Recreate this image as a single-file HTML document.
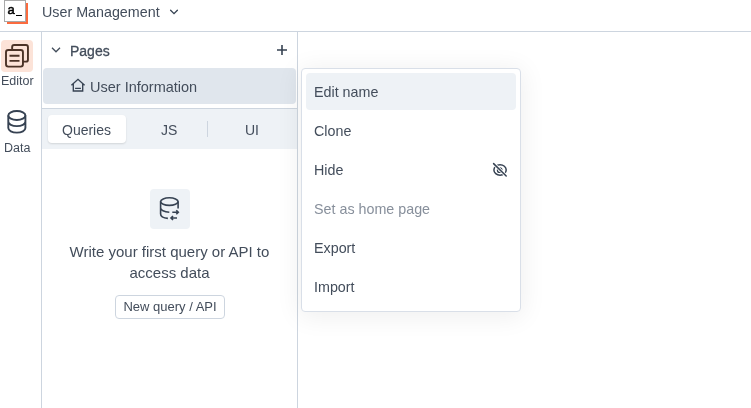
<!DOCTYPE html>
<html><head><meta charset="utf-8">
<style>
*{box-sizing:border-box;margin:0;padding:0}
html,body{width:751px;height:408px;overflow:hidden;background:#fff;font-family:"Liberation Sans",sans-serif;color:#434d5b}
.abs{position:absolute}
#header{left:0;top:0;width:751px;height:32px;border-bottom:1px solid #cdd5df;background:#fff}
#logoshadow{left:7px;top:3px;width:21px;height:21px;background:#fb6b3f}
#logo{left:4px;top:0;width:22px;height:22px;background:#fff;border:1px solid #a9a9a9}
#logo span{position:absolute;left:2.5px;top:1.7px;font-size:13px;color:#000;line-height:14px;-webkit-text-stroke:0.5px #000}
#logo i{position:absolute;left:10.8px;top:14.2px;width:6.6px;height:1.3px;background:#000}
#title{left:42px;top:4px;font-size:14.3px;line-height:17px;color:#434d5b}
#sidebar{left:0;top:32px;width:42px;height:376px;border-right:1px solid #cdd5df}
#edhl{left:1px;top:40px;width:32px;height:32px;border-radius:4px;background:#fce3d8}
.slabel{font-size:12.5px;color:#434d5b;line-height:14px}
#panel{left:42px;top:32px;width:256px;height:376px;border-right:1px solid #cdd5df}
#selpage{left:43px;top:68px;width:253px;height:36px;background:#e0e6ed;border-radius:4px}
#tabsbg{left:42px;top:108px;width:255px;height:41px;background:#eef2f6;border-top:1px solid #cdd5df}
#qbtn{left:48px;top:115px;width:78px;height:28px;background:#fff;border-radius:4px;box-shadow:0 1px 2px rgba(0,0,0,0.12)}
#menu{left:301px;top:68px;width:220px;height:244px;background:#fff;border:1px solid #d9dfe8;border-radius:4px;box-shadow:0 3px 26px 2px rgba(0,0,0,0.065);padding:4px}
.mi{position:relative;height:37px;margin-bottom:2px;border-radius:4px;font-size:14.3px;line-height:39px;padding-left:8px;color:#434d5b}
.mi.hl{background:#eef2f6}
.mi.dis{color:#878f9b}
#wrap{position:absolute;left:0;top:0;width:751px;height:408px;will-change:transform}
</style></head><body><div id="wrap">
<div id="header" class="abs">
  <div id="logoshadow" class="abs"></div><div id="logo" class="abs"><span>a</span><i></i></div>
  <div id="title" class="abs">User Management</div>
  <svg class="abs" style="left:168px;top:5px" width="12" height="12" viewBox="0 0 12 12"><path d="M2.6 5.2 L6 8.6 L9.4 5.2" fill="none" stroke="#364252" stroke-width="1.3" stroke-linecap="round"/></svg>
</div>
<div id="sidebar" class="abs"></div>
<div id="edhl" class="abs"></div>
<svg class="abs" style="left:0;top:38px" width="34" height="34" viewBox="0 0 34 34">
  <path d="M12.15 12.05 V9.05 a2 2 0 0 1 2-2 H25.95 a2 2 0 0 1 2 2 V21.65 a2 2 0 0 1 -2 2 H22.95" fill="none" stroke="#4b3327" stroke-width="1.9"/>
  <rect x="6" y="12.05" width="16.95" height="16.6" rx="2.3" fill="none" stroke="#4b3327" stroke-width="1.9"/>
  <path d="M9.5 17.75 H19.5 M9.5 22.9 H19.5" stroke="#4b3327" stroke-width="1.9"/>
</svg>
<div class="abs slabel" style="left:1px;top:74px">Editor</div>
<svg class="abs" style="left:4px;top:106px" width="26" height="30" viewBox="0 0 26 30">
  <ellipse cx="12.85" cy="9.5" rx="8.55" ry="4.5" fill="none" stroke="#364252" stroke-width="1.9"/>
  <path d="M4.3 9.5 V22.1 c0 2.5 3.8 4.5 8.55 4.5 s8.55-2 8.55-4.5 V9.5 M4.3 15.6 c0 2.5 3.8 4.5 8.55 4.5 s8.55-2 8.55-4.5" fill="none" stroke="#364252" stroke-width="1.9"/>
</svg>
<div class="abs slabel" style="left:4px;top:141px">Data</div>

<div id="panel" class="abs"></div>
<svg class="abs" style="left:50px;top:45px" width="12" height="10" viewBox="0 0 12 10"><path d="M2 2.8 L6 6.8 L10 2.8" fill="none" stroke="#434d5b" stroke-width="1.3"/></svg>
<div class="abs" style="left:70px;top:43px;font-size:14px;line-height:17px;color:#434d5b;-webkit-text-stroke:0.3px #434d5b">Pages</div>
<svg class="abs" style="left:276px;top:44px" width="12" height="12" viewBox="0 0 12 12"><path d="M6 1 V11 M1 6 H11" stroke="#364252" stroke-width="1.6"/></svg>
<div id="selpage" class="abs"></div>
<svg class="abs" style="left:70px;top:78px" width="16" height="15" viewBox="0 0 16 15"><path d="M1.4 7.2 L8 1.3 L14.6 7.2 M3.3 5.7 V13 H12.7 V5.7 M5.1 10.4 H10.9" fill="none" stroke="#364252" stroke-width="1.35"/></svg>
<div class="abs" style="left:90px;top:79px;font-size:14.5px;line-height:17px;color:#434d5b">User Information</div>
<div id="tabsbg" class="abs"></div>
<div id="qbtn" class="abs"></div>
<div class="abs" style="left:62px;top:122px;font-size:14px;line-height:17px;color:#434d5b">Queries</div>
<div class="abs" style="left:161px;top:122px;font-size:14px;line-height:17px;color:#434d5b">JS</div>
<div class="abs" style="left:207px;top:121px;width:1px;height:16px;background:#cdd5df"></div>
<div class="abs" style="left:245px;top:122px;font-size:14px;line-height:17px;color:#434d5b">UI</div>

<div class="abs" style="left:150px;top:189px;width:40px;height:40px;background:#eef2f6;border-radius:4px"></div>
<svg class="abs" style="left:155px;top:193px" width="30" height="30" viewBox="0 0 30 30">
  <ellipse cx="14.35" cy="8.6" rx="8.75" ry="3.8" fill="none" stroke="#364252" stroke-width="1.6"/>
  <path d="M5.6 8.6 V21 c0 2.2 3 4 7.3 4.4 M5.6 14.8 c0 2.2 3.5 4.2 8.7 4.5 M23.1 8.6 V15.4" fill="none" stroke="#364252" stroke-width="1.6"/>
  <path d="M17.3 19.3 H23.3 M21.3 17.3 L23.3 19.3 L21.3 21.3 M22 25 H16 M18 23 L16 25 L18 27" fill="none" stroke="#364252" stroke-width="1.6"/>
</svg>
<div class="abs" style="left:42px;top:241px;width:255px;text-align:center;font-size:15px;line-height:21px;color:#434d5b">Write your first query or API to<br>access data</div>
<div class="abs" style="left:115px;top:295px;width:110px;height:24px;border:1px solid #cdd5df;border-radius:4px;font-size:13px;line-height:22px;text-align:center;color:#434d5b">New query / API</div>

<div id="menu" class="abs">
  <div class="mi hl">Edit name</div>
  <div class="mi">Clone</div>
  <div class="mi">Hide
    <svg class="abs" style="left:184px;top:9px" width="20" height="20" viewBox="0 0 20 20">
      <ellipse cx="10.05" cy="9.95" rx="6.15" ry="5.2" fill="none" stroke="#364252" stroke-width="1.5"/>
      <circle cx="9.7" cy="10.2" r="2.2" fill="none" stroke="#364252" stroke-width="1.4"/>
      <path d="M3.4 3.4 L16.4 16.2" stroke="#fff" stroke-width="3.2"/>
      <path d="M3.6 3.6 L16.2 16" stroke="#364252" stroke-width="1.5" stroke-linecap="round"/>
    </svg>
  </div>
  <div class="mi dis">Set as home page</div>
  <div class="mi">Export</div>
  <div class="mi">Import</div>
</div>
</div></body></html>
